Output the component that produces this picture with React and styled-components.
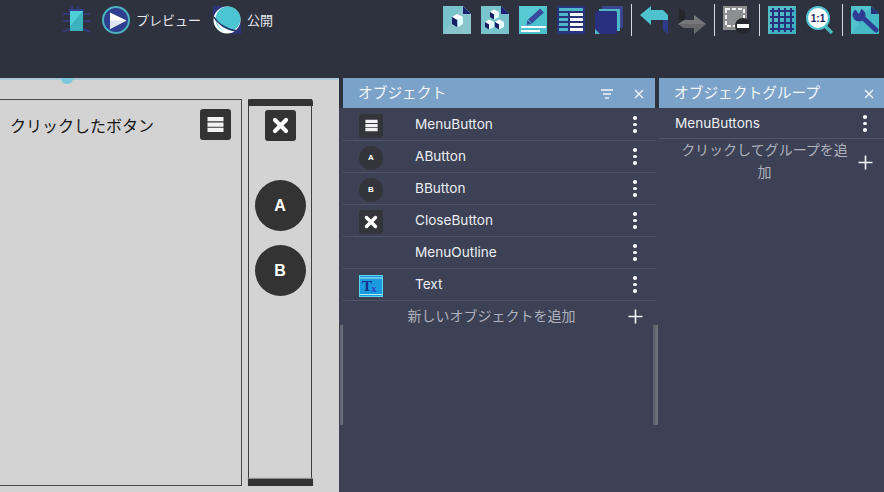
import React from 'react'
import styled, { createGlobalStyle } from 'styled-components'

const Global = createGlobalStyle`
  html, body {
    margin: 0;
    padding: 0;
    height: 100%;
    overflow: hidden;
    background: #2e323f;
  }
  body {
    font-family: Inter, "Noto Sans CJK JP", sans-serif;
  }
`

const Page = styled.div`
  width: 884px;
  height: 492px;
  display: flex;
  flex-direction: column;
  overflow: hidden;
`

const Toolbar = styled.header`
  height: 78px;
  flex: none;
  display: flex;
  justify-content: space-between;
  align-items: flex-start;
  padding: 6px 5px 0 63px;
  box-sizing: border-box;
  background: #2e323f;
`

const ToolGroup = styled.div`
  display: flex;
  align-items: center;
  height: 28px;
`

const ToolIcon = styled.svg`
  width: 28px;
  height: 28px;
  flex: none;
  display: block;
  margin-left: ${({ $gap }) => ($gap === undefined ? 10 : $gap)}px;
  &:first-child {
    margin-left: 0;
  }
`

const ToolLabel = styled.span`
  font-size: 13px;
  line-height: 28px;
  color: #e6e8ee;
  margin-left: 6px;
  white-space: nowrap;
`

const ToolDivider = styled.span`
  width: 1px;
  height: 32px;
  flex: none;
  background: #d5d8e0;
  margin: 0 8px;
`

const Workspace = styled.main`
  flex: 1;
  display: flex;
  min-height: 0;
  background: #3c4155;
`

const Canvas = styled.section`
  position: relative;
  width: 339px;
  flex: none;
  background: #d3d3d3;
  display: flex;
  gap: 6px;
  padding: 21px 0 0 0;
  box-sizing: border-box;
  overflow: hidden;
`

const SliderTrack = styled.div`
  position: absolute;
  top: 0;
  left: 0;
  width: 100%;
  height: 1.5px;
  background: #a9c9d8;
`

const SliderThumb = styled.div`
  position: absolute;
  top: -5px;
  left: 61px;
  width: 12px;
  height: 11px;
  border-radius: 50%;
  background: #7cc7de;
`

const Scene = styled.div`
  position: relative;
  width: 260px;
  margin-left: -18px;
  height: 387px;
  flex: none;
  box-sizing: border-box;
  border: 1px solid #4a4a4a;
`

const SceneLabel = styled.div`
  position: absolute;
  left: 27px;
  top: 15px;
  font-size: 16px;
  line-height: 22px;
  color: #141414;
  white-space: nowrap;
`

const SquareButton = styled.div`
  position: absolute;
  top: ${({ $top }) => $top}px;
  left: ${({ $left }) => $left}px;
  width: 31px;
  height: 31px;
  border-radius: 3px;
  background: #333333;
  display: flex;
  align-items: center;
  justify-content: center;
`

const RoundButton = styled.div`
  position: absolute;
  left: 5.5px;
  top: ${({ $top }) => $top}px;
  width: 51px;
  height: 51px;
  border-radius: 50%;
  background: #333333;
  color: #fff;
  font-family: "Liberation Sans", sans-serif;
  font-weight: 700;
  font-size: 16px;
  display: flex;
  align-items: center;
  justify-content: center;
`

const Outline = styled.div`
  position: relative;
  width: 64px;
  height: 387px;
  flex: none;
  box-sizing: border-box;
  border-left: 1.5px solid #3f3f3f;
  border-right: 1.5px solid #3f3f3f;
  &::before,
  &::after {
    content: '';
    position: absolute;
    left: -1.5px;
    right: -1.5px;
    height: 7px;
    background: #333333;
  }
  &::before {
    top: 0;
    border-radius: 3px 3px 0 0;
  }
  &::after {
    bottom: 0;
    box-shadow: 0 -1px 1px #8c8c8c;
  }
`

const Panels = styled.div`
  flex: 1;
  display: flex;
  padding-left: 4px;
  position: relative;
`

const Panel = styled.section`
  width: ${({ $width }) => $width}px;
  flex: none;
  margin-right: ${({ $gap }) => $gap || 0}px;
`

const PanelTitle = styled.div`
  height: 30px;
  display: flex;
  align-items: center;
  justify-content: space-between;
  padding: 0 ${({ $right }) => $right || 12}px 0 15px;
  background: #7ba2c9;
  color: #f3f6fa;
  font-size: 14.7px;
  margin-bottom: 1px;
`

const TitleText = styled.span`
  margin-bottom: 4px;
`

const PanelGap = styled.div`
  position: absolute;
  top: 0;
  left: ${({ $left }) => $left}px;
  width: 4px;
  height: 30px;
  background: #2e323f;
`

const TitleActions = styled.div`
  display: flex;
  align-items: center;
  gap: 20px;
  margin-top: 2px;
`

const Row = styled.div`
  height: 32px;
  box-sizing: border-box;
  display: grid;
  grid-template-columns: 72px 1fr 22px;
  align-items: center;
  padding-right: 10px;
  border-bottom: 1px solid #50556a;
  color: #eceef3;
  font-size: 13.6px;
`

const RowName = styled.span`
  margin-bottom: 2px;
`

const GroupRow = styled(Row)`
  height: 30px;
  grid-template-columns: 1fr 22px;
  padding: 0 8px 0 16px;
`

const Thumb = styled.div`
  justify-self: start;
  margin: 2px 0 0 16px;
  width: 24px;
  height: 24px;
  display: flex;
  align-items: center;
  justify-content: center;
  background: ${({ $clear }) => ($clear ? 'transparent' : '#34353a')};
  border-radius: ${({ $round }) => ($round ? '50%' : '2px')};
  color: #fff;
  font-family: "Liberation Sans", sans-serif;
  font-weight: 700;
  font-size: 8px;
`

const Kebab = styled.div`
  justify-self: center;
  display: flex;
  flex-direction: column;
  gap: 3px;
  i {
    display: block;
    width: 3.6px;
    height: 3.6px;
    border-radius: 50%;
    background: #f4f5f8;
  }
`

const AddRow = styled.div`
  height: 28px;
  display: grid;
  grid-template-columns: 1fr 22px;
  align-items: center;
  padding-right: 10px;
  color: #aeb1bc;
  font-size: 14px;
`

const AddLabel = styled.span`
  text-align: center;
  padding-left: ${({ $pad }) => $pad || 0}px;
`

const GroupAdd = styled(AddRow)`
  height: auto;
  padding: 0 8px 0 16px;
  line-height: 22px;
`

const Plus = styled.svg`
  width: 15px;
  height: 15px;
  justify-self: center;
  margin-top: ${({ $drop }) => $drop || 0}px;
`

const Grip = styled.div`
  position: absolute;
  top: 247px;
  left: ${({ $left }) => $left}px;
  width: ${({ $size }) => $size}px;
  height: 100px;
  background: linear-gradient(90deg, #5a5f6c, #70747c);
`

const Kebabs = () => (
  <Kebab>
    <i />
    <i />
    <i />
  </Kebab>
)

const AddIcon = ({ drop }) => (
  <Plus viewBox="0 0 15 15" $drop={drop}>
    <path d="M7.500 0.500v14M0.500 7.500h14" stroke="#f4f5f8" strokeWidth="1.6" />
  </Plus>
)

const MenuGlyph = ({ size = 17 }) => (
  <svg width={size} height={size} viewBox="0 0 17 17">
    <path d="M0.500 1h16v4.300H0.500zM0.500 6.400h16v4.300H0.500zM0.500 11.800h16v4.300H0.500z" fill="#f2f2f2" />
  </svg>
)

const CloseGlyph = ({ size = 17 }) => (
  <svg width={size} height={size} viewBox="0 0 17 17">
    <path d="M3 3l11 11M14 3L3 14" stroke="#fff" strokeWidth="4.200" strokeLinecap="round" />
  </svg>
)

const objects = [
  { name: 'MenuButton', thumb: <Thumb><MenuGlyph size={13} /></Thumb> },
  { name: 'AButton', thumb: <Thumb $round>A</Thumb> },
  { name: 'BButton', thumb: <Thumb $round>B</Thumb> },
  { name: 'CloseButton', thumb: <Thumb><CloseGlyph size={14} /></Thumb> },
  { name: 'MenuOutline', thumb: <Thumb $clear /> },
  {
    name: 'Text',
    thumb: (
      <Thumb $clear>
        <svg width="24" height="22" viewBox="0 0 24 22">
          <rect x="0.500" y="0.500" width="23" height="21" fill="#1a9be0" stroke="#59d3ee" />
          <path d="M1 3h22" stroke="#b5ecf5" />
          <path d="M1 19.500h22" stroke="#b5ecf5" />
          <text x="3" y="16" fontFamily="Liberation Serif" fontWeight="700" fontSize="15" fill="#17308f">T</text>
          <text x="12" y="17" fontFamily="Liberation Serif" fontWeight="700" fontSize="11" fill="#2b47c0">x</text>
        </svg>
      </Thumb>
    ),
  },
]

const Bug = () => (
  <ToolIcon viewBox="0 0 28 28">
    <path d="M9 0v5M15 0v5M0 8h7M0 15h7M0 26l7-3M20 8h7M20 15h7M27 26l-7-3" stroke="#343e8c" strokeWidth="1.500" fill="none" />
    <rect x="6" y="3" width="15" height="3" fill="#343e8c" />
    <path d="M7 5h13v20H7z" fill="#3cb2bf" />
    <path d="M7 5h13L7 20z" fill="#4fd0d8" />
  </ToolIcon>
)

const Play = () => (
  <ToolIcon viewBox="0 0 28 28" $gap={11}>
    <circle cx="14" cy="14" r="13" fill="#2f3e8e" stroke="#4bb3be" strokeWidth="2" />
    <path d="M8 6.500L24.500 14.500 8 23z" fill="#fff" />
    <path d="M8 23L24.500 14.500H8z" fill="#dfe6f0" />
  </ToolIcon>
)

const Planet = () => (
  <ToolIcon viewBox="0 0 28 28" $gap={12}>
    <path d="M0 0h11L0 11zM28 28H17L28 17z" fill="#2b3478" />
    <circle cx="14" cy="14" r="13.500" fill="#fff" />
    <circle cx="15" cy="13" r="12.500" fill="#4cc5d2" />
    <path d="M2.500 14c5 6 11 10 19 11.500-3 2-13 3-19-11.500z" fill="#fff" />
    <path d="M1 11c4 7 13 13 24 14" stroke="#27306f" strokeWidth="1.500" fill="none" />
  </ToolIcon>
)

const Page1 = () => (
  <ToolIcon viewBox="0 0 28 28">
    <path d="M0 0h20l8 8v20H0z" fill="#79c3cd" />
    <path d="M0 28L28 28V8L20 0z" fill="#8ac4cc" />
    <path d="M20 0l8 8h-8z" fill="#1c2273" />
    <path d="M9 11l5-3 6 3-5 3z" fill="#fff" />
    <path d="M9 11l5 3v7l-5-3z" fill="#171c63" />
    <path d="M20 11l-5 3v7l5-3z" fill="#dff" />
  </ToolIcon>
)

const Page2 = () => (
  <ToolIcon viewBox="0 0 28 28">
    <path d="M0 0h20l8 8v20H0z" fill="#79c3cd" />
    <path d="M20 0l8 8h-8z" fill="#1c2273" />
    <g>
      <path d="M9 6l4-2.500 5 2.500-5 2.500z" fill="#fff" />
      <path d="M9 6l4 2.500v5l-4-2.500z" fill="#171c63" />
      <path d="M18 6l-5 2.500v5l5-2.500z" fill="#e5ffff" />
      <path d="M4 16l4-2.500 5 2.500-5 2.500z" fill="#fff" />
      <path d="M4 16l4 2.500v5l-4-2.500z" fill="#171c63" />
      <path d="M13 16l-5 2.500v5l5-2.500z" fill="#e5ffff" />
      <path d="M14 16l4-2.500 5 2.500-5 2.500z" fill="#fff" />
      <path d="M14 16l4 2.500v5l-4-2.500z" fill="#171c63" />
      <path d="M23 16l-5 2.500v5l5-2.500z" fill="#e5ffff" />
    </g>
  </ToolIcon>
)

const Edit = () => (
  <ToolIcon viewBox="0 0 28 28">
    <rect width="28" height="28" fill="#4ac1cc" />
    <path d="M0 28V0h28z" fill="#56c9d2" />
    <path d="M11 15.500l12-11" stroke="#3a4a9e" strokeWidth="5.500" />
    <path d="M7.500 19l1-5 4 4z" fill="#3a4a9e" />
    <path d="M2 20h25v2H2zM2 24h19v2H2z" fill="#fff" />
  </ToolIcon>
)

const Table = () => (
  <ToolIcon viewBox="0 0 28 28">
    <rect width="28" height="28" fill="#28347a" />
    <path d="M2 2h24v3H2z" fill="#4fb8c8" />
    <path d="M2 7h9v3H2zM2 12h9v3H2zM2 17h9v3H2zM2 22h9v3H2z" fill="#4fb8c8" />
    <path d="M13 7h13v3H13zM13 12h13v3H13zM13 17h13v3H13zM13 22h13v3H13z" fill="#fff" />
  </ToolIcon>
)

const Layers = () => (
  <ToolIcon viewBox="0 0 28 28">
    <rect x="7" y="0" width="21" height="22" rx="1" fill="#3b4690" />
    <rect x="4" y="3" width="21" height="22" fill="#4fb8c8" />
    <rect x="0" y="5" width="22" height="23" rx="2" fill="#28307f" />
    <path d="M0 28v-5l5 5z" fill="#4fb8c8" />
  </ToolIcon>
)

const Back = () => (
  <ToolIcon viewBox="0 0 28 28" $gap={0}>
    <path d="M0 9L11 0v4h12l5 5v5H11v5z" fill="#4ec3cf" />
    <path d="M23 14h5v14l-5-4z" fill="#2f3b8a" />
  </ToolIcon>
)

const Forward = () => (
  <ToolIcon viewBox="0 0 28 28">
    <path d="M1 17V2l6 4v9z" fill="#24262c" />
    <path d="M28 18L16 9v5H6L0 18l6 4h10v6z" fill="#76787c" />
    <path d="M28 18L16 28v-6H6L0 18z" fill="#66686c" />
  </ToolIcon>
)

const Crop = () => (
  <ToolIcon viewBox="0 0 28 28" $gap={0}>
    <rect x="0" y="0" width="24" height="24" fill="#8c8e90" />
    <path d="M3 3h18v17H3z" fill="none" stroke="#f2f2f2" strokeWidth="2" strokeDasharray="4 2" />
    <circle cx="20" cy="20" r="8" fill="#26272d" />
    <rect x="14" y="18" width="12" height="4" fill="#fff" />
  </ToolIcon>
)

const Grid = () => (
  <ToolIcon viewBox="0 0 28 28" $gap={0}>
    <rect width="28" height="28" fill="#3fb0bf" />
    <path d="M0 28V0h28z" fill="#55bcc6" />
    <path d="M5 2v24M11 2v24M17 2v24M23 2v24M2 5h24M2 11h24M2 17h24M2 23h24" stroke="#27307d" strokeWidth="2" />
  </ToolIcon>
)

const Zoom = () => (
  <ToolIcon viewBox="0 0 28 28">
    <path d="M18 19l8 8" stroke="#4ab8b8" strokeWidth="3.500" />
    <circle cx="12" cy="12" r="11" fill="#fff" stroke="#4ec3cf" strokeWidth="2" />
    <text x="12" y="16" textAnchor="middle" fontFamily="Liberation Sans" fontWeight="700" fontSize="10" fill="#1e2660">1:1</text>
  </ToolIcon>
)

const Wrench = () => (
  <ToolIcon viewBox="0 0 28 28" $gap={0}>
    <path d="M0 0h20l8 8v20H0z" fill="#46b9c6" />
    <path d="M0 28V0h20z" fill="#52c3cd" />
    <path d="M20 0l8 8h-8z" fill="#27307d" />
    <path d="M10 10l15 14" stroke="#2e3c94" strokeWidth="5" strokeLinecap="round" />
    <circle cx="8" cy="9" r="6.500" fill="#2e3c94" />
    <path d="M8 8L2 0.500h9.500z" fill="#52c3cd" />
  </ToolIcon>
)

export default function App() {
  return (
    <Page>
      <Global />
      <Toolbar>
        <ToolGroup>
          <Bug />
          <Play />
          <ToolLabel>プレビュー</ToolLabel>
          <Planet />
          <ToolLabel>公開</ToolLabel>
        </ToolGroup>
        <ToolGroup>
          <Page1 />
          <Page2 />
          <Edit />
          <Table />
          <Layers />
          <ToolDivider />
          <Back />
          <Forward />
          <ToolDivider />
          <Crop />
          <ToolDivider />
          <Grid />
          <Zoom />
          <ToolDivider />
          <Wrench />
        </ToolGroup>
      </Toolbar>
      <Workspace>
        <Canvas>
          <SliderTrack />
          <SliderThumb />
          <Scene>
            <SceneLabel>クリックしたボタン</SceneLabel>
            <SquareButton $top={9} $left={217}>
              <MenuGlyph />
            </SquareButton>
          </Scene>
          <Outline>
            <SquareButton $top={11} $left={16}>
              <CloseGlyph />
            </SquareButton>
            <RoundButton $top={81}>A</RoundButton>
            <RoundButton $top={146}>B</RoundButton>
          </Outline>
        </Canvas>
        <Panels>
          <PanelGap $left={0} />
          <PanelGap $left={316} />
          <Grip $left={1} $size={3} />
          <Grip $left={314} $size={5} />
          <Panel $width={313} $gap={3}>
            <PanelTitle>
              <TitleText>オブジェクト</TitleText>
              <TitleActions>
                <svg width="14" height="12" viewBox="0 0 14 12">
                  <path d="M1 2h12M3 6h8M5 10h4" stroke="#f3f6fa" strokeWidth="1.300" />
                </svg>
                <svg width="10" height="10" viewBox="0 0 10 10">
                  <path d="M1 1l8 8M9 1l-8 8" stroke="#f3f6fa" strokeWidth="1.300" />
                </svg>
              </TitleActions>
            </PanelTitle>
            {objects.map(item => (
              <Row key={item.name}>
                {item.thumb}
                <RowName>{item.name}</RowName>
                <Kebabs />
              </Row>
            ))}
            <AddRow>
              <AddLabel $pad={16}>新しいオブジェクトを追加</AddLabel>
              <AddIcon drop={2} />
            </AddRow>
          </Panel>
          <Panel $width={225}>
            <PanelTitle $right={10}>
              <TitleText>オブジェクトグループ</TitleText>
              <TitleActions>
                <svg width="10" height="10" viewBox="0 0 10 10">
                  <path d="M1 1l8 8M9 1l-8 8" stroke="#f3f6fa" strokeWidth="1.300" />
                </svg>
              </TitleActions>
            </PanelTitle>
            <GroupRow>
              <RowName>MenuButtons</RowName>
              <Kebabs />
            </GroupRow>
            <GroupAdd>
              <AddLabel>クリックしてグループを追加</AddLabel>
              <AddIcon drop={2} />
            </GroupAdd>
          </Panel>
        </Panels>
      </Workspace>
    </Page>
  )
}
